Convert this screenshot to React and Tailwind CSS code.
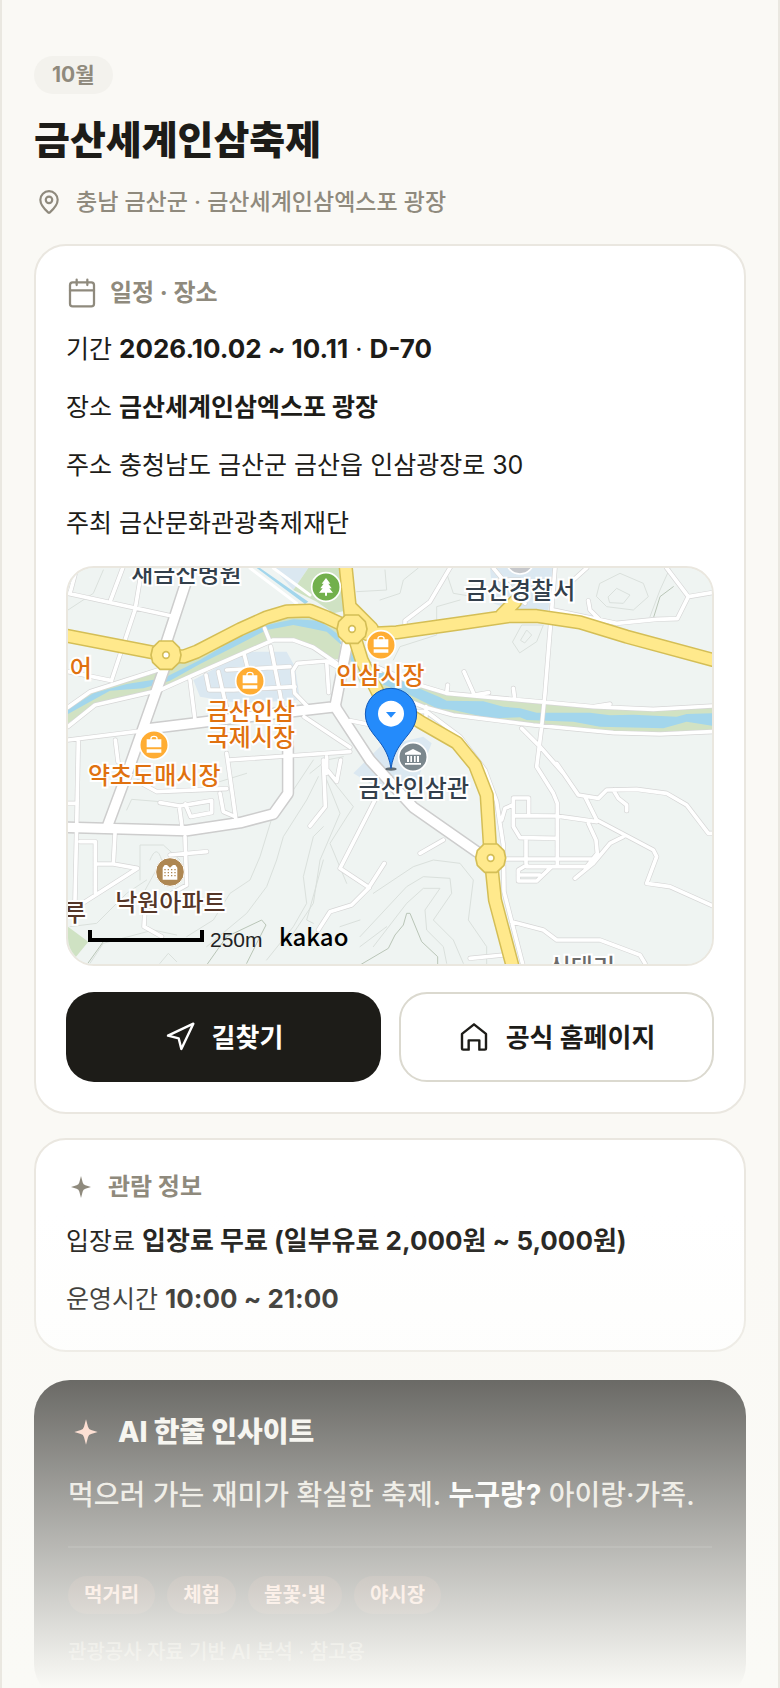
import React from "react";
import { LuMapPin, LuCalendar, LuNavigation } from "react-icons/lu";

const WHITE_MAJOR = [
  "M400 0L318 250M318 310L205 630L140 805",
  "M24 802L380 812L540 788L640 762L684 700V560L672 470",
  "M250 508L520 475L828 440",
  "M862 250L825 440L930 600L1060 742L1250 875L1292 894",
];

const WHITE_MINOR = [
  "M24 100L335 168M188 24L152 120M246 24L225 150L155 360M50 24L30 100M24 335L155 362",
  "M24 442L90 395L200 360L310 325M24 500L105 435L300 390L400 345L640 240L700 240L760 262L830 310",
  "M24 540L250 512M614 205L628 240M632 260L660 400L672 470M390 360L405 480",
  "M438 345L447 390H525M475 335L500 445M553 285L582 400M500 330L690 320M520 390L705 380",
  "M830 320L800 303L712 310L698 332L704 400L745 442M800 305L806 398",
  "M55 540L50 800L45 1020M166 540L174 605M500 580L528 780M505 600L870 575M732 470L870 562M800 590V640",
  "M870 482L960 500M24 730H50M235 665L290 695L500 686",
  "M300 728L360 738L455 722V758L392 770L376 732M480 700L490 755L525 770M358 740L366 800",
  "M165 820L160 912L232 925L60 1035M60 845H106V1000M106 912H160",
  "M375 830L380 975L255 1045L252 1100L305 1130M330 885L440 875",
  "M790 600L796 740L750 798M790 615L830 665L842 600",
  "M945 720L840 925L928 983M973 910L925 985L875 1035L810 1055L775 1110",
  "M1172 20L1110 125L1035 182V198M1580 24L1540 60M1300 24L1330 60L1395 130M1320 60H1380",
  "M1485 24L1455 400L1445 500L1430 620L1480 700L1492 730V915",
  "M1820 24L1885 110L1956 98M1885 110L1852 176L1790 178L1670 190L1480 150M1585 122L1590 150L1615 175",
  "M1212 335L1243 405L1286 398M1163 375L1160 400M1360 385L1364 415M1600 440L1650 432",
  "M900 300L960 325L1060 370L1160 400L1600 440L1780 448L1956 438",
  "M1040 420L1090 440L1180 465L1420 495L1660 518L1800 522L1956 515",
  "M1385 505L1440 560L1510 640M1098 440V470",
  "M1490 610L1555 705L1615 715L1640 690L1730 688L1820 700L1880 735L1945 820H1960",
  "M1575 710L1610 780L1780 870L1790 890L1760 970L1830 980L1960 1038M1660 690L1675 715L1700 735V752",
  "M1360 767L1490 768L1540 775L1610 785M1360 714H1406V765M1360 714V800L1380 833L1490 835",
  "M1398 840V910M1340 897H1600M1400 920H1580L1612 880L1608 840L1585 790",
  "M1545 955L1600 910L1650 850L1690 830M1400 915L1375 930V963H1430L1475 920M1380 945H1440",
  "M1080 880L1150 840M1230 1195L1330 1185M1325 780L1335 745L1358 735",
  "M1355 1085L1450 1110L1490 1140L1560 1140L1620 1140L1740 1185L1755 1210",
  "M1060 455L1100 455L1200 530L1275 630L1310 725L1330 855L1332 995L1390 1220",
];

const YELLOW = [
  "M24 228L318 285",
  "M318 285L370 290L410 275L540 208L620 172L680 154L750 152L800 172L876 207",
  "M855 0L876 207M870 140L935 205",
  "M920 222L1010 217L1200 190L1350 168L1430 168L1560 187L1700 230L1960 300",
  "M1325 165L1365 125",
  "M876 207L905 300L960 410L1080 485L1190 548L1245 615L1280 705L1292 894L1305 1020L1358 1220",
];

const CONTOURS = [
  "M200 750L215 718L300 725M240 960V855H310L360 900M270 900Q290 850 305 900L250 1000",
  "M30 1100L110 1090L200 1000L260 960M90 1210L130 1150L280 1110L350 1125",
  "M380 1130L460 1080L510 1000L570 960L600 890L640 760L700 690L760 600",
  "M440 1160L560 1060L620 980L650 900L670 830L740 720L775 650",
  "M620 1200L700 1100L740 1030L730 950L760 830L790 800M680 1150L760 1030L780 900L840 760L800 660",
  "M800 640L880 740L810 850L860 970M790 900L740 1080L760 1090M840 1100L900 1080",
  "M940 1000L1060 920L1120 900L1200 910L1240 960L1225 1080L1280 1160V1215",
  "M900 1130L1040 980L1090 950L1170 955L1175 1000L1120 1080L1180 1140L1210 1210",
  "M940 1160L1040 1030L1090 985H1140L1095 1050L1100 1110L1150 1160L1160 1210",
  "M24 150L100 100L130 30M890 95L980 90L975 30M1160 40L1180 100L1240 110",
  "M1620 70L1680 40L1750 70L1765 110L1720 150L1640 140L1610 110ZM1645 110L1670 85L1710 105L1690 130L1650 128Z",
  "M1830 24L1800 90L1770 170M1000 300L1020 260L1130 225V140L1200 120M960 120L1020 100L1030 60L1075 24",
  "M1358 245L1385 195L1450 195L1430 245L1380 278ZM1382 240L1400 210L1415 225L1395 248Z",
  "M750 640L800 600L850 590M430 680L560 640M900 1160L980 1100M300 1210L325 1180L350 1205",
];

const RIDGES = [
  "M440 1215L500 1130L605 1080L618 1095L590 1150L560 1210",
  "M900 1215L985 1165L1005 1125L1030 1095L1040 1060H1050L1085 1145L1133 1190V1215",
  "M80 1215L130 1145M1780 175L1800 110L1840 80",
];

// left/top are percentages of the map box
const LABELS = [
  { text: "새금산병원", left: 18.4, top: 1.6, color: "text-[#333f4b]" },
  { text: "금산경찰서", left: 70.2, top: 5.8, color: "text-[#333f4b]" },
  { text: "어", left: 2, top: 25.4, color: "text-[#e0710f]" },
  { text: "인삼시장", left: 48.5, top: 27.2, color: "text-[#e0710f]" },
  { text: "금산인삼", left: 28.4, top: 36.4, color: "text-[#e0710f]" },
  { text: "국제시장", left: 28.4, top: 43, color: "text-[#e0710f]" },
  { text: "약초도매시장", left: 13.4, top: 52.6, color: "text-[#e0710f]" },
  { text: "금산인삼관", left: 53.7, top: 55.8, color: "text-[#333f4b]" },
  { text: "낙원아파트", left: 15.9, top: 84.6, color: "text-[#553628]" },
  { text: "루", left: 1.1, top: 87, color: "text-[#553628]" },
  { text: "신대리", left: 79.8, top: 101, color: "text-[#6b6b6b]" },
];

const TAGS = ["먹거리", "체험", "불꽃·빛", "야시장"];

const Sparkle = ({ className }) => (
  <svg viewBox="0 0 24 24" fill="currentColor" aria-hidden="true" className={className}>
    <path d="M12 1L13.7 7.6Q14.2 9.8 16.4 10.3L22 12L16.4 13.7Q14.2 14.2 13.7 16.4L12 23L10.3 16.4Q9.8 14.2 7.6 13.7L2 12L7.6 10.3Q9.8 9.8 10.3 7.6Z" />
  </svg>
);

const House = ({ className }) => (
  <svg
    viewBox="0 0 24 24"
    fill="none"
    stroke="currentColor"
    strokeWidth="1.8"
    strokeLinejoin="round"
    aria-hidden="true"
    className={className}
  >
    <path d="M3 9.7L12 2.5L21 9.7V20.5Q21 21.5 20 21.5H16V14.5H8V21.5H4Q3 21.5 3 20.5Z" />
  </svg>
);

const Strokes = ({ paths, color, width }) => (
  <path
    d={paths.join("")}
    fill="none"
    stroke={color}
    strokeWidth={width}
    strokeLinejoin="round"
    strokeLinecap="round"
  />
);

const Roundabout = ({ x, y }) => (
  <g fill="#ffe98c" stroke="#d4be56" strokeWidth="5">
    <path
      transform={`translate(${x} ${y})`}
      d="M-20 -42L20 -42L40 -22L45 0L40 22L18 43L-18 43L-40 22L-45 0L-40 -22Z"
      strokeLinejoin="round"
    />
    <circle cx={x} cy={y} r="10" fill="#fff" />
  </g>
);

const BagPin = ({ x, y }) => (
  <g transform={`translate(${x} ${y})`}>
    <circle r="43" fill="#ffad33" stroke="#fff" strokeWidth="5" />
    <path d="M-22 -17H22V7H-22ZM-22 13H22V23H-22Z" fill="#fff" />
    <path d="M-9 -14V-20Q-9 -26 0 -26Q9 -26 9 -20V-14" fill="none" stroke="#fff" strokeWidth="4" />
  </g>
);

const MapView = () => (
  <div className="relative overflow-hidden rounded-[28px] border-2 border-[#eae7df] bg-[#eff4f2]">
    <svg viewBox="24 24 1932 1188" role="img" aria-label="금산인삼관 지도" className="block w-full">
      <rect width="1980" height="1240" fill="#eff4f2" />

      {/* blocks and parks */}
      <path d="M640 24H745L700 90ZM400 360L560 275L680 275L705 320L720 420L540 430L420 410Z" fill="#dbe8f1" />
      <path d="M1290 24H1480L1465 150L1380 160L1300 130ZM880 640L960 560L1090 530L1115 550L1080 640L1095 690L980 700Z" fill="#dbe8f1" />
      <path d="M700 90L745 24H850L868 150L820 160L770 125ZM24 1100L85 1145L40 1200L24 1180Z" fill="#cfe2c3" />
      <path
        d="M24 450L90 398L310 332L420 280L640 172L740 168L830 205L850 300L810 295L760 262L700 240H640L400 345L300 390L105 435L24 490Z"
        fill="#d1e2c3"
      />
      <path
        d="M840 240L900 300L1060 370L1160 400L1600 440L1780 448L1956 438V515L1800 522L1660 518L1420 495L1180 465L1040 420L900 370Z"
        fill="#d1e2c3"
      />
      <Strokes paths={CONTOURS} color="#dae0dc" width="3" />
      <Strokes paths={RIDGES} color="#b9c5b7" width="3" />

      {/* river */}
      <path
        d="M590 24L600 24L745 125L735 132ZM24 445L60 425L100 400L200 372L310 355L420 300L520 240L620 195L700 178L780 182L830 220L850 260L800 215L750 205L700 195L620 210L520 262L420 312L330 362L250 385L150 392L90 425L24 462Z"
        fill="#a3d6ec"
      />
      <path
        d="M850 245L900 310L960 335L1060 378L1140 412L1160 422L1270 424L1330 440L1380 445L1430 458L1590 458L1650 466L1720 464L1850 470L1880 462L1956 460V497L1880 485L1810 505L1620 500L1540 485L1400 480L1380 472L1290 475L1180 450L1130 445L1050 405L960 370L880 320Z"
        fill="#a3d6ec"
      />

      <Strokes paths={WHITE_MINOR} color="#d6d6d6" width="15" />
      <Strokes paths={WHITE_MAJOR} color="#cdcdcd" width="37" />
      <Strokes paths={WHITE_MINOR} color="#fff" width="11" />
      <Strokes paths={WHITE_MAJOR} color="#fff" width="28" />
      <Strokes paths={["M570 24L710 130M640 24L750 105"]} color="#fff" width="9" />
      <Strokes paths={YELLOW} color="#d4be56" width="43" />
      <Strokes paths={YELLOW} color="#ffe98c" width="34" />
      <Roundabout x={318} y={285} />
      <Roundabout x={876} y={207} />
      <Roundabout x={1292} y={894} />

      <BagPin x={570} y={363} />
      <BagPin x={282} y={555} />
      <BagPin x={963} y={255} />

      {/* park */}
      <g transform="translate(798 81)">
        <circle r="43" fill="#72b04c" stroke="#fff" strokeWidth="5" />
        <path d="M0 -27L13 -10H7L17 4H10L21 17H3V26H-3V17H-21L-10 4H-17L-7 -10H-13Z" fill="#fff" />
      </g>
      <circle cx="1380" cy="0" r="42" fill="#c5c7cb" stroke="#fff" strokeWidth="5" />

      {/* museum */}
      <g transform="translate(1059 591)">
        <circle r="43" fill="#7b878d" stroke="#fff" strokeWidth="5" />
        <path d="M0 -24L24 -12V-7H-24V-12ZM-18 -3H-12V15H-18ZM-8 -3H-3V15H-8ZM3 -3H8V15H3ZM12 -3H18V15H12ZM-24 18H24V23H-24Z" fill="#fff" />
      </g>

      {/* apartment */}
      <g transform="translate(330 936)">
        <circle r="43" fill="#ae8752" stroke="#fff" strokeWidth="3" />
        <path d="M-22 23V-13L-16 -21H-9L0 -13L9 -21H16L22 -13V23Z" fill="#fff" />
        <path d="M-17 -7H19M-17 2H19M-17 11H19" stroke="#ae8752" strokeWidth="4" strokeDasharray="4 6" />
      </g>

      {/* place marker */}
      <ellipse cx="993" cy="627" rx="17" ry="5" fill="#3f4a52" opacity=".8" />
      <path
        d="M993 625C985 575 965 553 940 522Q916 492 916 462A77 77 0 0 1 1070 462Q1070 492 1046 522C1021 553 1001 575 993 625Z"
        fill="#248bfb"
        stroke="#1259b8"
        strokeWidth="3"
      />
      <circle cx="993" cy="461" r="39" fill="#fff" />
      <path d="M978 456H1008L993 473Z" fill="#248bfb" />

      {/* scale */}
      <path d="M90 1110V1140H426V1110" fill="none" stroke="#000" strokeWidth="12" />
    </svg>

    {LABELS.map((label) => (
      <span
        key={label.text}
        className={`absolute -translate-x-1/2 -translate-y-1/2 whitespace-nowrap text-2xl leading-none font-medium [-webkit-text-stroke:4px_white] [paint-order:stroke_fill] ${label.color}`}
        style={{ left: `${label.left}%`, top: `${label.top}%` }}
      >
        {label.text}
      </span>
    ))}
    <span className="absolute bottom-3 left-[142px] font-['Liberation_Sans'] text-[21px] leading-6 text-[#222]">
      250m
    </span>
    <span className="absolute bottom-[14px] left-[211px] font-['Noto_Sans_CJK_KR'] text-2xl leading-7 font-medium text-black">
      kakao
    </span>
  </div>
);

const Card = ({ icon, title, children }) => (
  <section className="rounded-[32px] border-2 border-[#eae7e0] bg-white p-[30px]">
    <h2 className="flex h-[34px] items-center gap-3 text-2xl font-bold text-[#8f8a7d]">
      {icon}
      {title}
    </h2>
    {children}
  </section>
);

const Row = ({ label, children }) => (
  <p className="text-[25px] leading-[42px]">
    {label} {children}
  </p>
);

const App = () => {
  return (
    <div className="relative h-screen overflow-hidden border-x-2 border-[#eae8e1] bg-[#faf9f5] px-8 pt-14 font-['Inter','Noto_Sans_CJK_KR',sans-serif] text-[#1d1c18]">
      {/* Header */}
      <header>
        <span className="inline-flex h-[38px] items-center rounded-full bg-[#f3f2ed] px-[18px] text-[21px] font-bold text-[#8f8a7d]">
          10월
        </span>
        <h1 className="mt-4 text-[39px] leading-[60px] font-extrabold">금산세계인삼축제</h1>
        <p className="mt-[14px] flex h-9 items-center gap-3 text-[23px] font-medium text-[#8f8a7d]">
          <LuMapPin className="mx-[2px] size-[26px] shrink-0" />
          충남 금산군 · 금산세계인삼엑스포 광장
        </p>
      </header>

      <main className="mt-6">
        <Card icon={<LuCalendar className="size-8 stroke-[1.7]" />} title="일정 · 장소">
          <div className="mt-[18px] mb-[22px] flex flex-col gap-4">
            <Row label="기간">
              <b className="text-[26px]">2026.10.02 ~ 10.11</b> · <b className="text-[26px]">D-70</b>
            </Row>
            <Row label="장소">
              <b>금산세계인삼엑스포 광장</b>
            </Row>
            <Row label="주소">충청남도 금산군 금산읍 인삼광장로 30</Row>
            <Row label="주최">금산문화관광축제재단</Row>
          </div>

          <MapView />

          <div className="mt-[26px] grid grid-cols-2 gap-[18px]">
            <button className="flex h-[90px] items-center justify-center gap-4 rounded-[28px] bg-[#1d1c18] text-[26px] font-bold text-white">
              <LuNavigation className="size-8 stroke-[1.8]" />
              길찾기
            </button>
            <a
              href="#homepage"
              className="flex h-[90px] items-center justify-center gap-4 rounded-[28px] border-2 border-[#dbd9cf] bg-white text-[26px] font-bold"
            >
              <House className="size-8" />
              공식 홈페이지
            </a>
          </div>
        </Card>

        <div className="mt-6">
          <Card icon={<Sparkle className="mx-[3px] size-6" />} title="관람 정보">
            <div className="mt-4 flex flex-col gap-4">
              <Row label="입장료">
                <b className="text-[26px]">입장료 무료 (일부유료 2,000원 ~ 5,000원)</b>
              </Row>
              <Row label="운영시간">
                <b className="text-[26px]">10:00 ~ 21:00</b>
              </Row>
            </div>
          </Card>
        </div>

        {/* AI insight */}
        <section className="mt-7 rounded-[36px] bg-[#1d1c18] p-[34px] text-[#f4f2ec]">
          <h2 className="flex h-9 items-center gap-[18px] text-[28px] font-extrabold">
            <Sparkle className="ml-1 size-7 text-[#ffc9b5]" />
            AI 한줄 인사이트
          </h2>
          <p className="mt-5 text-[28px] leading-[50px] font-medium text-[#e0ddd3]">
            먹으러 가는 재미가 확실한 축제. <b className="text-white">누구랑?</b> 아이랑·가족.
          </p>
          <div className="mt-[26px] flex gap-3 border-t-2 border-white/10 pt-7">
            {TAGS.map((tag) => (
              <span
                key={tag}
                className="flex h-[38px] items-center rounded-full bg-[#ff8a65]/15 px-4 text-xl font-bold text-[#ffc9b5]"
              >
                {tag}
              </span>
            ))}
          </div>
          <p className="mt-6 text-xl leading-7 font-medium text-[#8f8a7d]">관광공사 자료 기반 AI 분석 · 참고용</p>
        </section>
      </main>

      {/* Fade out at the bottom of the preview */}
      <div className="absolute inset-x-0 bottom-0 h-[474px] bg-linear-to-b from-[#fafaf6]/0 to-[#fafaf6]" />
    </div>
  );
};

export default App;
